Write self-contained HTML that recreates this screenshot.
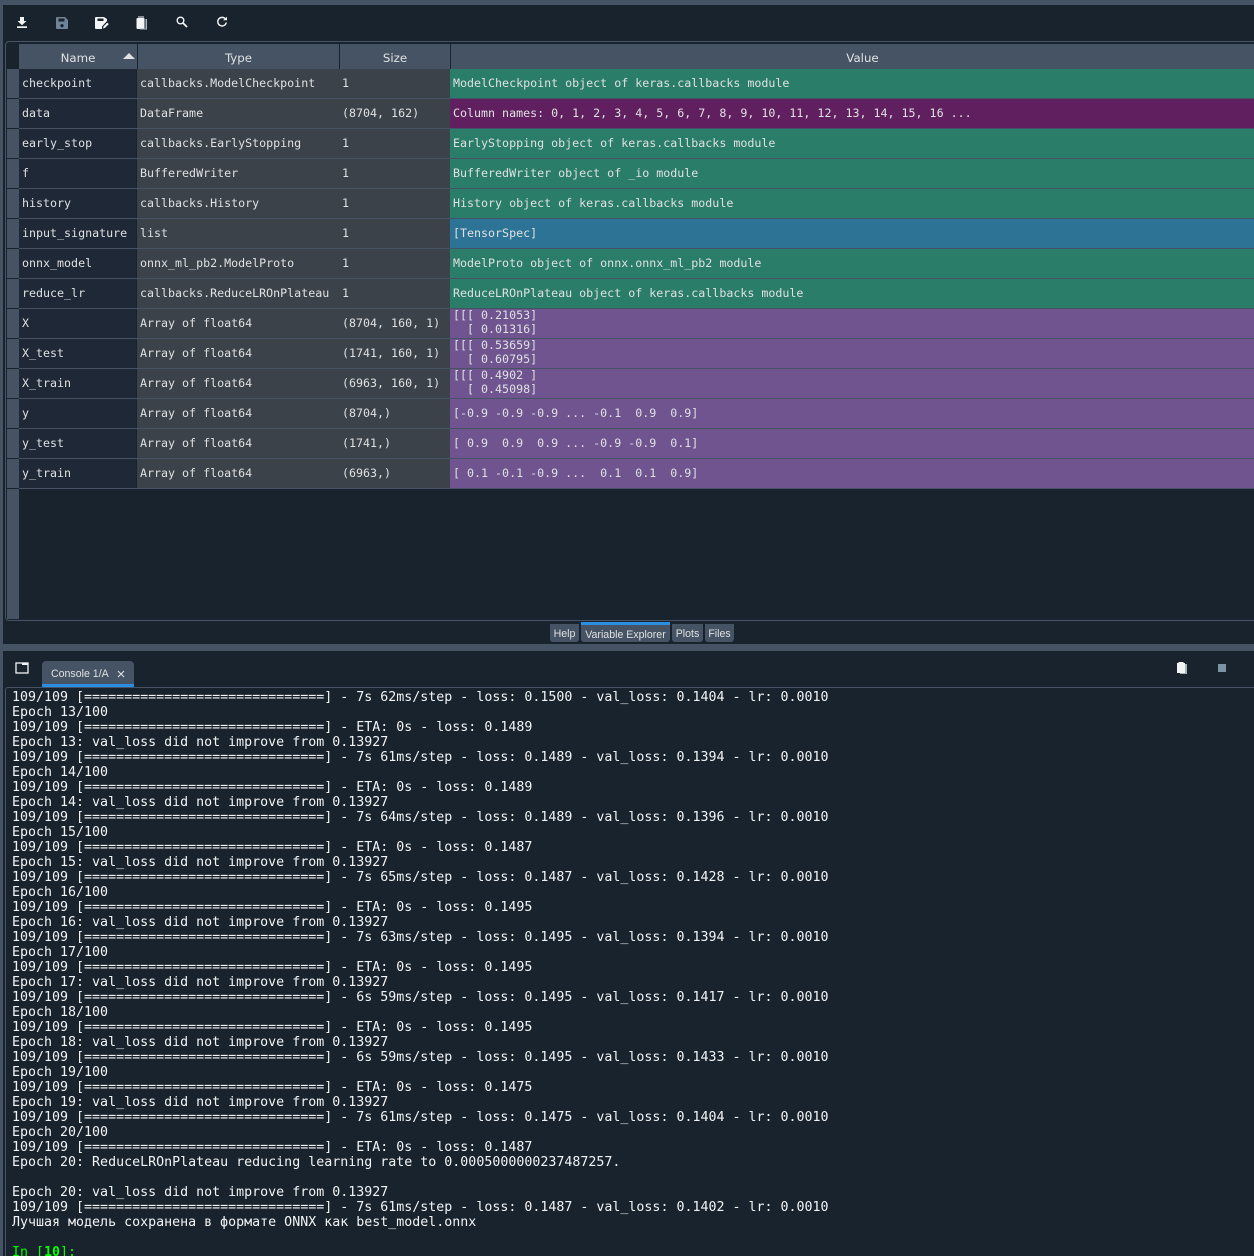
<!DOCTYPE html>
<html><head><meta charset="utf-8"><style>
html,body{margin:0;padding:0;background:#19232D}
html{width:1254px;height:1256px;overflow:hidden}
body{width:1254px;height:1256px;position:relative;overflow:hidden;font-family:"DejaVu Sans","Liberation Sans",sans-serif}
#w{position:absolute;left:0;top:0;width:1254px;height:1256px;overflow:hidden}
.a{position:absolute}
.bar{background:#455364}
.h{position:absolute;top:44px;height:25px;line-height:28px;background:#455364;color:#DFE1E2;font-size:11.8px;text-align:center;box-sizing:border-box}
.r{position:absolute;left:7px;width:1247px;height:30px;font:11.65px/29px "DejaVu Sans Mono","Noto Sans CJK SC",monospace;color:#DFE1E2;white-space:pre}
.r div{position:absolute;top:0;height:29px;box-sizing:border-box;padding-left:3px;overflow:hidden}
.r:after{content:"";position:absolute;left:12px;right:0;top:29px;height:1px;background:#455364}
.vh{left:0;width:12px;background:#455364;padding:0!important}
.n{left:12px;width:117px;background:#1F2836}
.t{left:130px;width:202px;background:#3C4249}
.s{left:332px;width:111px;background:#3C4249}
.v{left:443px;width:804px}
.g{background:#2A7D68}.p{background:#60205F}.b{background:#2D7396}.u{background:#6F5490}
.m{line-height:14px!important}
.m span{display:block;position:relative;top:-1px}
#c{position:absolute;left:12px;top:690px;font:13.3px/15px "DejaVu Sans Mono","Noto Sans CJK SC",monospace;color:#F2F4F5;white-space:pre}
.tb{position:absolute;top:624px;height:18px;background:#455364;color:#DFE1E2;font:10.6px/21px "Liberation Sans",sans-serif;text-align:center;border-radius:0 0 3px 3px}
svg{position:absolute}
</style></head><body><div id="w">
<div class="a bar" style="left:0;top:0;width:1254px;height:5px"></div>
<div class="a bar" style="left:0;top:0;width:3px;height:1256px"></div>

<svg style="left:16px;top:16px" width="12" height="13" viewBox="0 0 12 13"><path d="M4 1h4v4h2.500L6 9.200 1.500 5H4z" fill="#F2F4F5"/><rect x="1" y="10.300" width="10" height="1.700" fill="#F2F4F5"/></svg>
<svg style="left:56px;top:17px" width="12" height="12" viewBox="0 0 12 12"><path fill-rule="evenodd" d="M1 0h8l3 3v8a1 1 0 0 1-1 1H1a1 1 0 0 1-1-1V1a1 1 0 0 1 1-1zM2.500 1.500v3h6v-3zM6 7a1.700 1.700 0 1 0 .01 0z" fill="#6F8496"/></svg>
<svg style="left:95px;top:17px" width="14" height="12" viewBox="0 0 14 12"><path fill-rule="evenodd" d="M1 0h8l3 2v2L7 9.500V12H1a1 1 0 0 1-1-1V1a1 1 0 0 1 1-1zM2.500 1.500v2.500h6V1.500z" fill="#F2F4F5"/><path d="M8 11.500l.6-2.200 3.700-3.700 1.500 1.500-3.700 3.700z" fill="#F2F4F5"/></svg>
<svg style="left:136px;top:16px" width="12" height="14" viewBox="0 0 12 14"><rect x="0.500" y="2" width="8" height="11" rx="1" fill="#F2F4F5"/><rect x="2" y="0.500" width="6" height="1" fill="#F2F4F5"/><path d="M9.500 3h1.500v10.500H4V12.500h5.500z" fill="#A9B3BC"/></svg>
<svg style="left:176px;top:16px" width="12" height="12" viewBox="0 0 12 12"><circle cx="4.500" cy="4.500" r="3.300" fill="none" stroke="#F2F4F5" stroke-width="1.400"/><path d="M7 7l4 4" stroke="#F2F4F5" stroke-width="1.800"/></svg>
<svg style="left:216px;top:16px" width="12" height="12" viewBox="0 0 12 12"><path d="M9.600 3.200A4.300 4.300 0 1 0 10.300 6.500" fill="none" stroke="#F2F4F5" stroke-width="1.400"/><path d="M7 4.300h4V.8z" fill="#F2F4F5"/></svg>

<div class="a" style="left:5px;top:41px;width:1260px;height:580px;border:1px solid #455364;border-radius:4px;box-sizing:border-box"></div>
<div class="a bar" style="left:7px;top:489px;width:12px;height:130px"></div>

<div class="h" style="left:19px;width:118px">Name</div>
<svg style="left:123px;top:53px" width="12" height="6" viewBox="0 0 12 6"><path d="M0 6L6 0l6 6z" fill="#DFE1E2"/></svg>
<div class="h" style="left:138px;width:201px">Type</div>
<div class="h" style="left:340px;width:110px">Size</div>
<div class="h" style="left:451px;width:823px">Value</div>

<div class="r" style="top:69px"><div class="vh"></div><div class="n">checkpoint</div><div class="t">callbacks.ModelCheckpoint</div><div class="s">1</div><div class="v g">ModelCheckpoint object of keras.callbacks module</div></div>
<div class="r" style="top:99px"><div class="vh"></div><div class="n">data</div><div class="t">DataFrame</div><div class="s">(8704, 162)</div><div class="v p">Column names: 0, 1, 2, 3, 4, 5, 6, 7, 8, 9, 10, 11, 12, 13, 14, 15, 16 ...</div></div>
<div class="r" style="top:129px"><div class="vh"></div><div class="n">early_stop</div><div class="t">callbacks.EarlyStopping</div><div class="s">1</div><div class="v g">EarlyStopping object of keras.callbacks module</div></div>
<div class="r" style="top:159px"><div class="vh"></div><div class="n">f</div><div class="t">BufferedWriter</div><div class="s">1</div><div class="v g">BufferedWriter object of _io module</div></div>
<div class="r" style="top:189px"><div class="vh"></div><div class="n">history</div><div class="t">callbacks.History</div><div class="s">1</div><div class="v g">History object of keras.callbacks module</div></div>
<div class="r" style="top:219px"><div class="vh"></div><div class="n">input_signature</div><div class="t">list</div><div class="s">1</div><div class="v b">[TensorSpec]</div></div>
<div class="r" style="top:249px"><div class="vh"></div><div class="n">onnx_model</div><div class="t">onnx_ml_pb2.ModelProto</div><div class="s">1</div><div class="v g">ModelProto object of onnx.onnx_ml_pb2 module</div></div>
<div class="r" style="top:279px"><div class="vh"></div><div class="n">reduce_lr</div><div class="t">callbacks.ReduceLROnPlateau</div><div class="s">1</div><div class="v g">ReduceLROnPlateau object of keras.callbacks module</div></div>
<div class="r" style="top:309px"><div class="vh"></div><div class="n">X</div><div class="t">Array of float64</div><div class="s">(8704, 160, 1)</div><div class="v u m"><span>[[[ 0.21053]
  [ 0.01316]</span></div></div>
<div class="r" style="top:339px"><div class="vh"></div><div class="n">X_test</div><div class="t">Array of float64</div><div class="s">(1741, 160, 1)</div><div class="v u m"><span>[[[ 0.53659]
  [ 0.60795]</span></div></div>
<div class="r" style="top:369px"><div class="vh"></div><div class="n">X_train</div><div class="t">Array of float64</div><div class="s">(6963, 160, 1)</div><div class="v u m"><span>[[[ 0.4902 ]
  [ 0.45098]</span></div></div>
<div class="r" style="top:399px"><div class="vh"></div><div class="n">y</div><div class="t">Array of float64</div><div class="s">(8704,)</div><div class="v u">[-0.9 -0.9 -0.9 ... -0.1  0.9  0.9]</div></div>
<div class="r" style="top:429px"><div class="vh"></div><div class="n">y_test</div><div class="t">Array of float64</div><div class="s">(1741,)</div><div class="v u">[ 0.9  0.9  0.9 ... -0.9 -0.9  0.1]</div></div>
<div class="r" style="top:459px"><div class="vh"></div><div class="n">y_train</div><div class="t">Array of float64</div><div class="s">(6963,)</div><div class="v u">[ 0.1 -0.1 -0.9 ...  0.1  0.1  0.9]</div></div>

<div class="tb" style="left:550px;width:29px">Help</div>
<div class="tb" style="left:581px;width:89px;top:622px;height:20px;border-top:3px solid #2A8FE0;box-sizing:border-box;line-height:20px">Variable Explorer</div>
<div class="tb" style="left:672px;width:31px">Plots</div>
<div class="tb" style="left:705px;width:29px">Files</div>
<div class="a bar" style="left:0;top:644px;width:1254px;height:7px"></div>

<svg style="left:15px;top:662px" width="14" height="12" viewBox="0 0 14 12"><rect x="1" y="1" width="12" height="10" fill="none" stroke="#F2F4F5" stroke-width="1.300"/><rect x="7" y="0.500" width="6.500" height="2.500" fill="#F2F4F5"/></svg>
<div class="a" style="left:42px;top:661px;width:92px;height:23px;background:#455364;border-radius:4px 4px 0 0;color:#DFE1E2;font:10.6px/26px 'Liberation Sans',sans-serif;padding-left:9px;box-sizing:border-box">Console 1/A</div>
<svg style="left:117px;top:670px" width="8" height="8" viewBox="0 0 8 8"><path d="M1 1l6 6M7 1L1 7" stroke="#DFE1E2" stroke-width="1.100"/></svg>
<div class="a" style="left:42px;top:684px;width:92px;height:3px;background:#2A8FE0"></div>
<svg style="left:1176px;top:661px" width="12" height="14" viewBox="0 0 12 14"><rect x="1" y="2" width="8" height="10" fill="#F2F4F5"/><rect x="2.500" y="1" width="5" height="1" fill="#F2F4F5"/><path d="M9 3h2v10H4v-1h5z" fill="#A9B3BC"/></svg>
<div class="a" style="left:1218px;top:664px;width:8px;height:8px;background:#7C93A3"></div>

<div class="a" style="left:5px;top:687px;width:1260px;height:580px;border:1px solid #455364;border-radius:3px;box-sizing:border-box"></div>

<div id="c">109/109 [==============================] - 7s 62ms/step - loss: 0.1500 - val_loss: 0.1404 - lr: 0.0010
Epoch 13/100
109/109 [==============================] - ETA: 0s - loss: 0.1489
Epoch 13: val_loss did not improve from 0.13927
109/109 [==============================] - 7s 61ms/step - loss: 0.1489 - val_loss: 0.1394 - lr: 0.0010
Epoch 14/100
109/109 [==============================] - ETA: 0s - loss: 0.1489
Epoch 14: val_loss did not improve from 0.13927
109/109 [==============================] - 7s 64ms/step - loss: 0.1489 - val_loss: 0.1396 - lr: 0.0010
Epoch 15/100
109/109 [==============================] - ETA: 0s - loss: 0.1487
Epoch 15: val_loss did not improve from 0.13927
109/109 [==============================] - 7s 65ms/step - loss: 0.1487 - val_loss: 0.1428 - lr: 0.0010
Epoch 16/100
109/109 [==============================] - ETA: 0s - loss: 0.1495
Epoch 16: val_loss did not improve from 0.13927
109/109 [==============================] - 7s 63ms/step - loss: 0.1495 - val_loss: 0.1394 - lr: 0.0010
Epoch 17/100
109/109 [==============================] - ETA: 0s - loss: 0.1495
Epoch 17: val_loss did not improve from 0.13927
109/109 [==============================] - 6s 59ms/step - loss: 0.1495 - val_loss: 0.1417 - lr: 0.0010
Epoch 18/100
109/109 [==============================] - ETA: 0s - loss: 0.1495
Epoch 18: val_loss did not improve from 0.13927
109/109 [==============================] - 6s 59ms/step - loss: 0.1495 - val_loss: 0.1433 - lr: 0.0010
Epoch 19/100
109/109 [==============================] - ETA: 0s - loss: 0.1475
Epoch 19: val_loss did not improve from 0.13927
109/109 [==============================] - 7s 61ms/step - loss: 0.1475 - val_loss: 0.1404 - lr: 0.0010
Epoch 20/100
109/109 [==============================] - ETA: 0s - loss: 0.1487
Epoch 20: ReduceLROnPlateau reducing learning rate to 0.0005000000237487257.

Epoch 20: val_loss did not improve from 0.13927
109/109 [==============================] - 7s 61ms/step - loss: 0.1487 - val_loss: 0.1402 - lr: 0.0010
Лучшая модель сохранена в формате ONNX как best_model.onnx

<span style="color:#00FF00">In [<b>10</b>]:</span></div>
</div></body></html>
